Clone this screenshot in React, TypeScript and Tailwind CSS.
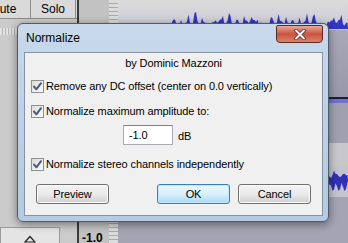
import React from "react";

const font = { fontFamily: '"Liberation Sans", Arial, sans-serif' };

function wavePath(x0: number, x1: number, base: number, amp: number, seed: number) {
  let d = `M${x0} ${base}`;
  for (let x = x0; x <= x1; x += 1.5) {
    const n =
      Math.abs(Math.sin(x * 0.37 + seed) * Math.sin(x * 0.11 + seed * 2)) * 0.7 +
      Math.abs(Math.sin(x * 1.7 + seed)) * 0.3;
    const h = amp * (0.25 + n * 0.75) * (Math.sin(x * 0.9 + seed) > 0.6 ? 1 : 0.55);
    d += ` L${x.toFixed(1)} ${(base - h).toFixed(1)}`;
  }
  d += ` L${x1} ${base} Z`;
  return d;
}

function Checkbox() {
  return (
    <span className="flex h-[13px] w-[13px] shrink-0 items-center justify-center border border-[#8e8f8f] bg-gradient-to-br from-[#dcdcdc] to-[#fbfbfb]">
      <svg width="11" height="11" viewBox="0 0 11 11">
        <path d="M2 5.5 L4.4 8.3 L9 2.2" fill="none" stroke="#4a5f7e" strokeWidth="2" strokeLinecap="round" strokeLinejoin="round" />
      </svg>
    </span>
  );
}

function CheckRow({ label, className }: { label: string; className?: string }) {
  return (
    <div className={`flex h-[14px] items-center gap-[2px] pl-[6px] ${className ?? ""}`}>
      <Checkbox />
      <span className="leading-[14px]">{label}</span>
    </div>
  );
}

function WinButton({ label, primary }: { label: string; primary?: boolean }) {
  return (
    <div
      className={`flex h-[20px] w-[73px] items-center justify-center rounded-[3px] border text-[11px] ${
        primary
          ? "border-[#3c7fb1] bg-gradient-to-b from-[#eaf6fd] via-[#d9f0fc] to-[#a7d9f5] shadow-[inset_0_0_0_1px_#bfe6fa]"
          : "border-[#707070] bg-gradient-to-b from-[#f2f2f2] via-[#ebebeb] to-[#cfcfcf] shadow-[inset_0_0_0_1px_#fcfcfc]"
      }`}
    >
      {label}
    </div>
  );
}

function Dialog() {
  return (
    <div className="absolute left-[17px] top-[23px] flex h-[199px] w-[312px] flex-col rounded-[6px] border border-[#4d5b6c] bg-gradient-to-b from-[#c9d9ea] via-[#bcd0e6] to-[#b4cbe3] shadow-[0_2px_8px_rgba(0,0,0,0.45)]">
      <div className="flex h-[28px] justify-between">
        <span className="pl-[8px] pt-[7px] text-[12px] leading-[14px] text-black">Normalize</span>
        <div className="mr-[5px] mt-[1px] flex h-[18px] w-[47px] items-center justify-center rounded-b-[4px] rounded-t-[2px] border border-[#5b2a22] bg-gradient-to-b from-[#e9a99a] via-[#c8523d] to-[#d9826a]">
          <svg width="12" height="11" viewBox="0 0 12 11">
            <path d="M2 1.5 L10 9.5 M10 1.5 L2 9.5" stroke="#5a2a25" strokeWidth="3.6" strokeLinecap="round" />
            <path d="M2 1.5 L10 9.5 M10 1.5 L2 9.5" stroke="#ffffff" strokeWidth="2" strokeLinecap="round" />
          </svg>
        </div>
      </div>
      <div className="mx-[6px] mb-[5px] mr-[5px] flex flex-1 flex-col border border-[#8593a5] bg-[#f0f0f0] text-[11px] tracking-[-0.1px] text-black">
        <div className="pt-[3px] text-center leading-[14px]">by Dominic Mazzoni</div>
        <CheckRow label="Remove any DC offset (center on 0.0 vertically)" className="mt-[9px]" />
        <CheckRow label="Normalize maximum amplitude to:" className="mt-[11px]" />
        <div className="ml-[98px] mt-[7px] flex items-center gap-[5px]">
          <div className="flex h-[20px] w-[50px] items-center border border-[#abadb3] border-t-[#7d8188] bg-white pl-[5px] leading-[14px]">
            -1.0
          </div>
          <span className="pt-[2px]">dB</span>
        </div>
        <CheckRow label="Normalize stereo channels independently" className="mt-[12px]" />
        <div className="mt-[13px] flex justify-between px-[11px]">
          <WinButton label="Preview" />
          <div className="flex gap-[8px]">
            <WinButton label="OK" primary />
            <WinButton label="Cancel" />
          </div>
        </div>
      </div>
    </div>
  );
}

export default function App() {
  return (
    <div className="relative h-[243px] w-[348px] overflow-hidden bg-[#c6c6c6] text-black" style={font}>
      <div className="flex h-full">
        {/* track control panel */}
        <div className="flex w-[77px] flex-col bg-[#cbcbcb]">
          <div className="flex h-[19px] border-b border-[#8c8c8c] bg-[#dadada] text-[12px]">
            <div className="ml-[-24px] flex w-[55px] items-center justify-center border-r border-[#8c8c8c]">Mute</div>
            <div className="flex w-[45px] items-center justify-center border-r border-[#8c8c8c]">Solo</div>
          </div>
          <div className="mt-[9px] h-[7px] w-[22px] bg-[repeating-linear-gradient(90deg,#e2e2e2_0_2px,#b4b4b4_2px_3px)]" />
          <div className="flex-1" />
          <div className="flex h-[16px] w-[60px] items-end justify-center border border-b-0 border-[#9a9a9a] bg-[#e4e4e4]">
            <svg width="12" height="8" viewBox="0 0 12 8">
              <path d="M1 7 L6 1.5 L11 7 Z" fill="none" stroke="#202020" strokeWidth="1.2" />
            </svg>
          </div>
        </div>
        <div className="w-[2px] bg-[#3a3a3a]" />
        {/* vertical scale */}
        <div className="flex w-[30px] flex-col bg-[#c2c2c2]">
          <div className="flex-1" />
          <div className="h-[12px] pl-[3px] text-[12px] font-bold leading-[14px]">-1.0</div>
        </div>
        <div className="w-[9px] bg-[repeating-linear-gradient(180deg,#dcdcdc_0_3px,#a8a8a8_3px_4px)]" />
        {/* waveform */}
        <div className="flex flex-1 flex-col bg-[#a6a6b6]">
          <div className="h-[30px] bg-gradient-to-b from-[#dcdcdc] to-[#c8c8d4]">
            <svg width="230" height="30" viewBox="0 0 230 30">
              <path d={wavePath(54, 230, 29, 18, 1.3)} fill="#3535c4" />
            </svg>
          </div>
          <div className="h-[67px] bg-gradient-to-b from-[#a8a8b8] to-[#9898aa]" />
          <div className="h-[2px] bg-[#1c1c3c]" />
          <div className="h-[4px] bg-[#7070d0]" />
          <div className="h-[40px] bg-[#a0a0b0]" />
          <div className="h-[22px] bg-[#c8c8cc]" />
          <div className="h-[32px] bg-[#c4c4cc]">
            <svg width="230" height="32" viewBox="0 0 230 32">
              <path d={wavePath(0, 230, 16, 14, 2.7)} fill="#3030b8" />
              <path d={`M0 16 ${Array.from({ length: 154 }, (_, i) => `L${i * 1.5} ${16 + 10 * Math.abs(Math.sin(i * 0.8))}`).join(" ")} L230 16 Z`} fill="#3030b8" />
            </svg>
          </div>
          <div className="flex-1 bg-[#a4a4b2]" />
        </div>
      </div>
      <Dialog />
    </div>
  );
}
